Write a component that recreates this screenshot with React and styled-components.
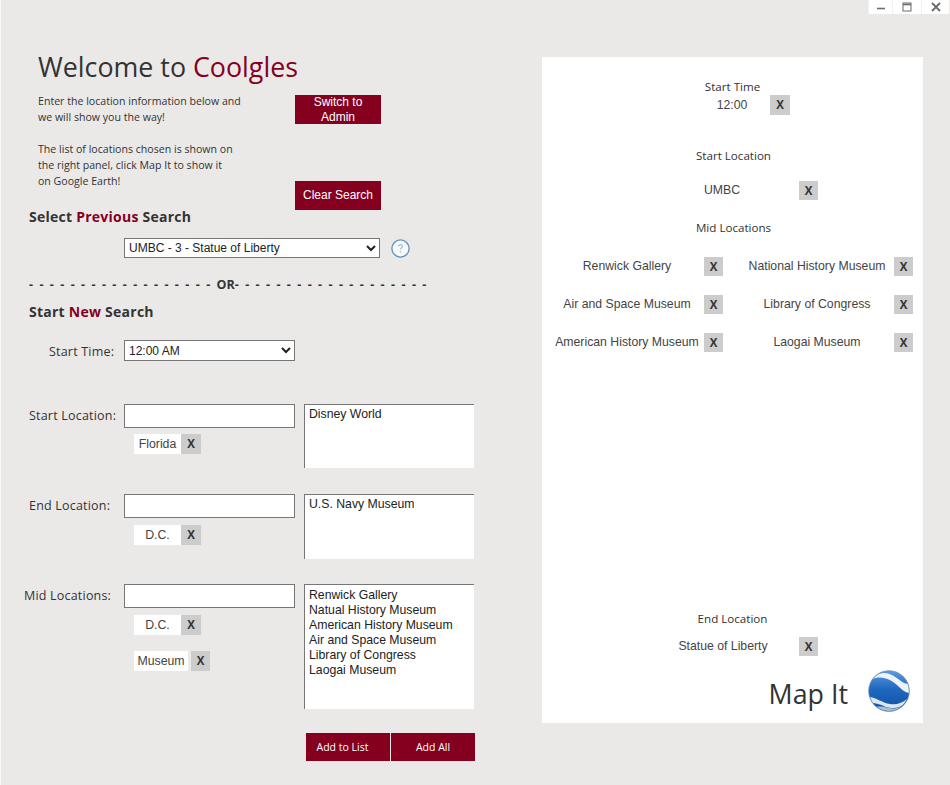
import React from 'react';
import styled, { createGlobalStyle } from 'styled-components';

const TITLE_FONT = '"Open Sans", "DejaVu Sans", sans-serif';
const BODY_FONT = '"Liberation Sans", Arial, sans-serif';
const CRIMSON = '#85001f';

const GlobalStyle = createGlobalStyle`
  html, body {
    margin: 0;
    padding: 0;
    background: #ebe9e8;
  }
  * {
    box-sizing: border-box;
  }
`;

const Page = styled.div`
  width: 950px;
  height: 785px;
  background: #ebe9e8;
  border-left: 1px solid #f8f8f8;
  overflow: hidden;
`;
const WindowBar = styled.div`
  height: 14px;
  margin-right: 1px;
  display: flex;
  justify-content: flex-end;
`;
const WindowButton = styled.div`
  width: ${props => props.$width}px;
  height: 14px;
  background: #fff;
  border-left: 1px solid #f1f1f1;
  display: flex;
  align-items: center;
  justify-content: center;
`;
const Content = styled.div`
  display: flex;
`;
const LeftPane = styled.div`
  width: 541px;
  padding-left: 23px;
  padding-top: 35px;
`;
const RightPane = styled.div`
  width: 381px;
  height: 666px;
  margin-top: 43px;
  background: #fff;
  padding: 22px 0 11px;
  display: flex;
  flex-direction: column;
  color: #333;
`;
const Title = styled.h1`
  margin: 0 0 0 14px;
  font: 400 26.8px/36px ${TITLE_FONT};
  color: #333;
`;
const Accent = styled.span`
  color: ${CRIMSON};
`;
const Intro = styled.div`
  margin: 8px 0 0 14px;
  display: grid;
  grid-template-columns: 257px 86px;
`;
const IntroText = styled.div`
  font: 400 10.6px/16px ${TITLE_FONT};
  color: #333;
  white-space: nowrap;
  p {
    margin: 0 0 16px;
  }
`;
const IntroActions = styled.div`
  padding-top: 2px;
  display: flex;
  flex-direction: column;
  justify-content: space-between;
  height: 117px;
`;
const RedButton = styled.button`
  width: 86px;
  height: 29px;
  padding: 0;
  border: none;
  background: ${CRIMSON};
  color: #fff;
  font: 400 12px/15px ${BODY_FONT};
`;
const SectionHeading = styled.h2`
  margin: ${props => props.$top}px 0 0 5px;
  font: 700 14px/14px ${TITLE_FONT};
  letter-spacing: 0.25px;
  color: #333;
`;
const PreviousRow = styled.div`
  margin: 14px 0 0 100px;
  display: flex;
  align-items: center;
  gap: 11px;
`;
const Select = styled.select`
  width: ${props => props.$width}px;
  height: ${props => props.$height}px;
  padding: 0;
  background: #fff;
  border: 1px solid #767676;
  border-radius: 0;
  font: 400 12px ${BODY_FONT};
  color: #222;
`;
const Divider = styled.div`
  margin: 17px 0 0 5px;
  width: 402px;
  font: 700 12.5px/20px ${TITLE_FONT};
  color: #333;
  white-space: nowrap;
  overflow: hidden;
  word-spacing: 3.15px;
`;
const FormRow = styled.div`
  margin-top: ${props => props.$top}px;
  display: grid;
  grid-template-columns: 100px 171px 170px;
  column-gap: 0;
`;
const FieldLabel = styled.label`
  padding-left: ${props => props.$indent}px;
  font: 400 12.5px/24px ${TITLE_FONT};
  letter-spacing: 0.2px;
  color: #333;
  white-space: nowrap;
`;
const Field = styled.div`
  display: flex;
  flex-direction: column;
  align-items: flex-start;
`;
const TextInput = styled.input`
  width: 171px;
  height: 24px;
  background: #fff;
  border: 1px solid #767676;
  border-radius: 0;
`;
const Tag = styled.div`
  margin: ${props => props.$top}px 0 0 10px;
  display: flex;
  gap: ${props => props.$gap || 0}px;
`;
const TagText = styled.span`
  width: ${props => props.$width}px;
  height: 20px;
  background: #fff;
  font: 400 12.3px/20px ${BODY_FONT};
  color: #444;
  text-align: center;
`;
const RemoveButton = styled.button`
  width: ${props => props.$size || 19}px;
  height: ${props => props.$height || 19}px;
  flex: none;
  padding: 0;
  border: none;
  background: #cccccc;
  color: #333;
  font: 700 11.5px/1 ${TITLE_FONT};
`;
const ListBox = styled.div`
  margin-left: 9px;
  width: 170px;
  height: ${props => props.$height}px;
  padding: ${props => props.$top || 2}px 4px 0;
  background: #fff;
  border-top: 1px solid #767676;
  border-left: 1px solid #767676;
  font: 400 12.25px/15px ${BODY_FONT};
  color: #222;
`;
const ActionBar = styled.div`
  margin: 24px 0 0 282px;
  display: flex;
  gap: 1px;
`;
const ActionButton = styled.button`
  width: 84px;
  height: 28px;
  padding: 0 ${props => props.$inset || 0}px 0 0;
  border: none;
  background: ${CRIMSON};
  color: #fff;
  font: 400 10.5px/28px ${TITLE_FONT};
`;
const PanelHeading = styled.div`
  margin-top: ${props => props.$top || 0}px;
  font: 400 11.6px/16px ${TITLE_FONT};
  text-align: center;
  padding-left: ${props => props.$shift || 0}px;
  color: #333;
`;
const SelectedRow = styled.div`
  margin-top: ${props => props.$top || 0}px;
  padding-left: ${props => props.$left}px;
  display: flex;
  align-items: center;
  gap: ${props => props.$gap}px;
`;
const SelectedText = styled.span`
  width: ${props => props.$width}px;
  flex: none;
  font: 400 12.25px/19px ${BODY_FONT};
  color: #444;
  text-align: center;
  white-space: nowrap;
`;
const MidGrid = styled.div`
  margin-top: 21px;
  padding-left: 10px;
  display: grid;
  grid-template-columns: 171px 169px;
  column-gap: 21px;
  row-gap: 19px;
`;
const MidItem = styled.div`
  display: flex;
  align-items: center;
  justify-content: space-between;
`;
const EndHeading = styled(PanelHeading)`
  margin-top: auto;
`;
const MapRow = styled.div`
  margin-top: 14px;
  padding-right: 13px;
  display: flex;
  justify-content: flex-end;
  gap: 20px;
`;
const MapLabel = styled.span`
  height: 41px;
  font: 400 26.8px/48px ${TITLE_FONT};
  color: #333;
`;

const WindowIcon = ({ kind }) => (
  <svg width="10" height="10" viewBox="0 0 10 10" fill="none" stroke="#6b6b6b">
    {kind === 'min' && <path d="M1 6.5h8" strokeWidth="1.6" />}
    {kind === 'max' && (
      <>
        <rect x="1" y="1" width="8" height="8" strokeWidth="1" />
        <path d="M1 2.5h8" strokeWidth="1.6" />
      </>
    )}
    {kind === 'close' && <path d="M1 1l8 8M9 1l-8 8" strokeWidth="1.8" />}
  </svg>
);

const HelpIcon = () => (
  <svg width="19" height="19" viewBox="0 0 19 19">
    <circle cx="9.5" cy="9.5" r="8.6" fill="#f7f9fb" stroke="#5f8fb8" strokeWidth="1.3" />
    <path
      d="M7.4 7.4c.2-1.2 1-1.8 2.1-1.8 1.2 0 2 .7 2 1.7 0 1.5-2 1.6-2 3.2"
      fill="none"
      stroke="#9db6cb"
      strokeWidth="1.1"
    />
    <circle cx="9.5" cy="13" r=".8" fill="#9db6cb" />
  </svg>
);

const EarthIcon = () => (
  <svg width="42" height="42" viewBox="0 0 42 42">
    <defs>
      <linearGradient id="earth" x1="0" y1="0" x2="0" y2="1">
        <stop offset="0%" stopColor="#5b9be0" />
        <stop offset="45%" stopColor="#1f68c0" />
        <stop offset="100%" stopColor="#12509f" />
      </linearGradient>
      <clipPath id="earth-clip">
        <circle cx="21" cy="21" r="20" />
      </clipPath>
    </defs>
    <circle cx="21" cy="21" r="20.5" fill="url(#earth)" />
    <g clipPath="url(#earth-clip)">
      <path d="M5 9C14 5 24 10 30 16c4 4 8 7 12 7l-1-9C35 14 31 9 24 5 17 1 9 3 5 9z" fill="#eef3f9" />
      <path d="M1 27c7 0 13 6 21 7 7 1 12-1 17-5l-4 6c-5 3-9 4-17 2-6-3-11-4-14-4z" fill="#dce6f1" />
      <path d="M8 37c5-1 9 0 13 1 5 1 10 0 13-2l-4 6H12z" fill="#a9bdd4" />
    </g>
    <circle cx="21" cy="21" r="20.3" fill="none" stroke="#8b99aa" strokeWidth=".7" />
  </svg>
);

const midStops = [
  'Renwick Gallery',
  'National History Museum',
  'Air and Space Museum',
  'Library of Congress',
  'American History Museum',
  'Laogai Museum',
];

const App = () => (
  <Page>
    <GlobalStyle />
    <WindowBar>
      <WindowButton $width={24}>
        <WindowIcon kind="min" />
      </WindowButton>
      <WindowButton $width={29}>
        <WindowIcon kind="max" />
      </WindowButton>
      <WindowButton $width={28}>
        <WindowIcon kind="close" />
      </WindowButton>
    </WindowBar>
    <Content>
      <LeftPane>
        <Title>
          Welcome to <Accent>Coolgles</Accent>
        </Title>
        <Intro>
          <IntroText>
            <p>
              Enter the location information below and
              <br />
              we will show you the way!
            </p>
            <p>
              The list of locations chosen is shown on
              <br />
              the right panel, click Map It to show it
              <br />
              on Google Earth!
            </p>
          </IntroText>
          <IntroActions>
            <RedButton>
              Switch to
              <br />
              Admin
            </RedButton>
            <RedButton>Clear Search</RedButton>
          </IntroActions>
        </Intro>
        <SectionHeading $top={0}>
          Select <Accent>Previous</Accent> Search
        </SectionHeading>
        <PreviousRow>
          <Select $width={256} $height={20} defaultValue="umbc">
            <option value="umbc">UMBC - 3 - Statue of Liberty</option>
          </Select>
          <HelpIcon />
        </PreviousRow>
        <Divider>- - - - - - - - - - - - - - - - - - OR- - - - - - - - - - - - - - - - - - -</Divider>
        <SectionHeading $top={10}>
          Start <Accent>New</Accent> Search
        </SectionHeading>
        <FormRow $top={21}>
          <FieldLabel $indent={25}>Start Time:</FieldLabel>
          <Select $width={171} $height={21} defaultValue="12">
            <option value="12">12:00 AM</option>
          </Select>
        </FormRow>
        <FormRow $top={40}>
          <FieldLabel $indent={5}>Start Location:</FieldLabel>
          <Field>
            <TextInput />
            <Tag $top={6}>
              <TagText $width={47}>Florida</TagText>
              <RemoveButton $size={20} $height={20}>X</RemoveButton>
            </Tag>
          </Field>
          <ListBox $height={64}>Disney World</ListBox>
        </FormRow>
        <FormRow $top={26}>
          <FieldLabel $indent={5}>End Location:</FieldLabel>
          <Field>
            <TextInput />
            <Tag $top={7}>
              <TagText $width={47}>D.C.</TagText>
              <RemoveButton $size={20} $height={20}>X</RemoveButton>
            </Tag>
          </Field>
          <ListBox $height={65}>U.S. Navy Museum</ListBox>
        </FormRow>
        <FormRow $top={25}>
          <FieldLabel $indent={0}>Mid Locations:</FieldLabel>
          <Field>
            <TextInput />
            <Tag $top={7}>
              <TagText $width={47}>D.C.</TagText>
              <RemoveButton $size={20} $height={20}>X</RemoveButton>
            </Tag>
            <Tag $top={16} $gap={3}>
              <TagText $width={54}>Museum</TagText>
              <RemoveButton $size={19} $height={20}>X</RemoveButton>
            </Tag>
          </Field>
          <ListBox $height={125} $top={3}>
            <div>Renwick Gallery</div>
            <div>Natual History Museum</div>
            <div>American History Museum</div>
            <div>Air and Space Museum</div>
            <div>Library of Congress</div>
            <div>Laogai Museum</div>
          </ListBox>
        </FormRow>
        <ActionBar>
          <ActionButton $inset={11}>Add to List</ActionButton>
          <ActionButton>Add All</ActionButton>
        </ActionBar>
      </LeftPane>
      <RightPane>
        <PanelHeading $shift={-2}>Start Time</PanelHeading>
        <SelectedRow $left={160} $gap={8}>
          <SelectedText $width={60}>12:00</SelectedText>
          <RemoveButton $size={20} $height={20}>X</RemoveButton>
        </SelectedRow>
        <PanelHeading $top={33} $shift={2}>Start Location</PanelHeading>
        <SelectedRow $top={17} $left={120} $gap={17}>
          <SelectedText $width={120}>UMBC</SelectedText>
          <RemoveButton>X</RemoveButton>
        </SelectedRow>
        <PanelHeading $top={20} $shift={2}>Mid Locations</PanelHeading>
        <MidGrid>
          {midStops.map((stop, index) => (
            <MidItem key={stop}>
              <SelectedText $width={index % 2 ? 146 : 150}>{stop}</SelectedText>
              <RemoveButton>X</RemoveButton>
            </MidItem>
          ))}
        </MidGrid>
        <EndHeading $shift={0}>End Location</EndHeading>
        <SelectedRow $top={10} $left={121} $gap={16}>
          <SelectedText $width={120}>Statue of Liberty</SelectedText>
          <RemoveButton>X</RemoveButton>
        </SelectedRow>
        <MapRow>
          <MapLabel>Map It</MapLabel>
          <EarthIcon />
        </MapRow>
      </RightPane>
    </Content>
  </Page>
);

export default App;
